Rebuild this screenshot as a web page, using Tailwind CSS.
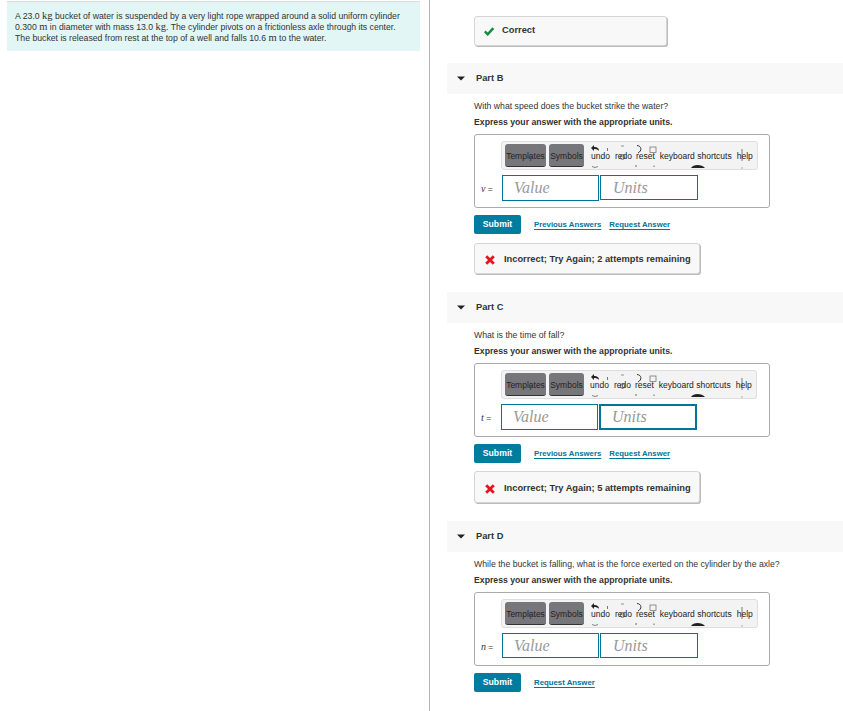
<!DOCTYPE html>
<html lang="en">
<head>
  <meta charset="UTF-8">
  <title>Part B, C, D</title>
  <script src="https://cdn.jsdelivr.net/npm/@tailwindcss/browser@4"></script>
</head>
<body class="bg-white font-['Liberation_Sans',Arial,sans-serif] text-[#333] overflow-hidden">
  <div class="flex h-[711px] w-[843px] overflow-hidden">

    <!-- Left: problem statement -->
    <div class="w-[430px] shrink-0 border-r border-[#b5b5b5] pt-px pl-[7px] pr-[9px]">
      <div class="h-[50px] bg-[#e2f6f5] border-t border-[#dcdcdc] pl-2 pt-[9px] text-[8.7px] leading-[11px] text-[#333]">
        <p>A 23.0 <span class="font-['Liberation_Serif',serif] text-[10.5px] leading-none">kg</span> bucket of water is suspended by a very light rope wrapped around a solid uniform cylinder</p>
        <p>0.300 <span class="font-['Liberation_Serif',serif] text-[10.5px] leading-none">m</span> in diameter with mass 13.0 <span class="font-['Liberation_Serif',serif] text-[10.5px] leading-none">kg</span>. The cylinder pivots on a frictionless axle through its center.</p>
        <p>The bucket is released from rest at the top of a well and falls 10.6 <span class="font-['Liberation_Serif',serif] text-[10.5px] leading-none">m</span> to the water.</p>
      </div>
    </div>

    <!-- Right: parts -->
    <div class="flex-1 pl-[17px] pt-4">
      <div class="ml-[27px] w-[193px] h-[30px] flex items-center gap-[8px] pl-[9px] rounded-[3px] bg-[#f8f8f8] border border-[#d4d4d4] shadow-[1px_1px_0_#bbb] text-[9.3px] font-bold">
        <svg class="w-[10px] h-[9px]" viewBox="0 0 10 9"><path d="M0.800 4.400 L3.700 7.300 L9.300 1.200" fill="none" stroke="#1a8a3c" stroke-width="2.500"/></svg>
        <span>Correct</span>
      </div>

      <!-- Part B -->
      <section class="mt-[17px] h-[229px]">
        <div class="h-[31px] bg-[#f8f8f8] flex items-center pl-[10px] text-[9.3px] font-bold">
          <svg class="w-[8px] h-[5px] mr-[11px]" viewBox="0 0 8 5"><path d="M0 0.5H8L4 4.5Z" fill="#222"/></svg>
          <span>Part B</span>
        </div>
        <div class="pl-[27px]">
          <p class="mt-[6px] h-[16px] leading-[11px] pt-px text-[8.7px]">With what speed does the bucket strike the water?</p>
          <p class="h-[12px] leading-[12px] text-[8.7px] font-bold">Express your answer with the appropriate units.</p>
          <div class="mt-[6px] w-[296px] h-[74px] border border-[#aaa] rounded-[3px] pl-[26px] pt-[6px]">
            <div class="relative w-[257px] h-[29px] bg-[#f3f3f3] border border-[#dedede] rounded-[3px] flex items-center pl-[3px] text-[8.5px] text-[#222] whitespace-nowrap">
              <span class="w-[41px] h-[23px] pt-[2px] rounded-[3px] bg-[#77767b] border-b border-[#333] flex items-center justify-center">Templates</span>
              <span class="ml-[3px] w-[35px] h-[23px] pt-[2px] rounded-[3px] bg-[#77767b] border-b border-[#333] flex items-center justify-center">Symbols</span>
              <span class="ml-[7px] mt-[2px]">undo</span>
              <span class="ml-[5px] mt-[2px]">redo</span>
              <span class="ml-[4px] mt-[2px]">reset</span>
              <span class="ml-[5px] mt-[2px]">keyboard shortcuts</span>
              <span class="ml-[5px] mt-[2px]">help</span>
              <svg class="absolute left-0 top-0 w-[257px] h-[29px]" viewBox="0 0 257 29"><path d="M89 6 L92 3 V5 C95 5 97 6 97 9 C96 7.500 94 7 92 7 V9Z" fill="#222"/><path d="M90 24.500 L93 25.500 L96 24.500" fill="none" stroke="#555" stroke-width=".7"/><path d="M105.500 6V9" stroke="#555" stroke-width=".8"/><path d="M119 4H122" stroke="#777" stroke-width=".8"/><circle cx="120.500" cy="15" r="2.300" fill="none" stroke="#444" stroke-width=".8"/><path d="M135 3.500 C140 4 140 9 136 11" fill="none" stroke="#333" stroke-width="1"/><path d="M134 23V25" stroke="#444" stroke-width=".8"/><rect x="148" y="5" width="6" height="5.500" fill="none" stroke="#666" stroke-width=".7"/><path d="M152 23.500V25" stroke="#444" stroke-width=".8"/><path d="M189 26 C191 22 200 22 203 26Z" fill="#222"/><path d="M240 7V19" stroke="#444" stroke-width=".7"/><path d="M240 25.500V26.500" stroke="#444" stroke-width=".8"/><path d="M27 13 L29 19 M30 14 L28 19" stroke="#444" stroke-width=".7"/></svg>
            </div>
            <div class="mt-[5px] flex items-start -ml-[20px]">
              <span class="w-[21px] mt-[6px] text-[8.5px] text-[#333] whitespace-nowrap"><i class="font-['Liberation_Serif',serif] text-[10px]">v</i> =</span>
              <span class="w-[97px] h-[26px] border border-[#00759a] pl-[11px] font-['Liberation_Serif',serif] italic text-[16px] leading-[24px] text-[#999]">Value</span>
              <span class="ml-px w-[98px] h-[25px] border border-[#00759a] pl-[12px] font-['Liberation_Serif',serif] italic text-[16px] leading-[23px] text-[#999]">Units</span>
            </div>
          </div>
          <div class="mt-[7px] flex items-center text-[7.8px] font-bold text-[#00759a]">
            <span class="w-[47px] h-[19px] rounded-[2px] bg-[#007c9e] text-white text-[8.7px] flex items-center justify-center">Submit</span>
            <a class="ml-[13px] underline underline-offset-2">Previous Answers</a>
            <a class="ml-2 underline underline-offset-2">Request Answer</a>
          </div>
          <div class="mt-[9px] w-[226px] h-[31px] pt-[2px] flex items-center gap-[9px] pl-[10px] rounded-[3px] bg-[#f8f8f8] border border-[#d4d4d4] shadow-[1px_1px_0_#bbb] text-[9.3px] font-bold whitespace-nowrap">
            <svg class="w-[10px] h-[10px]" viewBox="0 0 10 10"><path d="M1.200 1.200 L8.800 8.800 M8.800 1.200 L1.200 8.800" stroke="#e8141c" stroke-width="2.800"/></svg>
            <span>Incorrect; Try Again; 2 attempts remaining</span>
          </div>
        </div>
      </section>

      <!-- Part C -->
      <section class="h-[229px]">
        <div class="h-[31px] bg-[#f8f8f8] flex items-center pl-[10px] text-[9.3px] font-bold">
          <svg class="w-[8px] h-[5px] mr-[11px]" viewBox="0 0 8 5"><path d="M0 0.5H8L4 4.5Z" fill="#222"/></svg>
          <span>Part C</span>
        </div>
        <div class="pl-[27px]">
          <p class="mt-[6px] h-[16px] leading-[11px] pt-px text-[8.7px]">What is the time of fall?</p>
          <p class="h-[12px] leading-[12px] text-[8.7px] font-bold">Express your answer with the appropriate units.</p>
          <div class="mt-[6px] w-[296px] h-[74px] border border-[#aaa] rounded-[3px] pl-[26px] pt-[6px]">
            <div class="relative w-[256px] h-[29px] bg-[#f3f3f3] border border-[#dedede] rounded-[3px] flex items-center pl-[3px] text-[8.5px] text-[#222] whitespace-nowrap">
              <span class="w-[41px] h-[23px] pt-[2px] rounded-[3px] bg-[#77767b] border-b border-[#333] flex items-center justify-center">Templates</span>
              <span class="ml-[3px] w-[35px] h-[23px] pt-[2px] rounded-[3px] bg-[#77767b] border-b border-[#333] flex items-center justify-center">Symbols</span>
              <span class="ml-[6px] mt-[2px]">undo</span>
              <span class="ml-[5px] mt-[2px]">redo</span>
              <span class="ml-[4px] mt-[2px]">reset</span>
              <span class="ml-[5px] mt-[2px]">keyboard shortcuts</span>
              <span class="ml-[5px] mt-[2px]">help</span>
              <svg class="absolute left-0 top-0 w-[256px] h-[29px]" viewBox="0 0 256 29"><path d="M89 6 L92 3 V5 C95 5 97 6 97 9 C96 7.500 94 7 92 7 V9Z" fill="#222"/><path d="M90 24.500 L93 25.500 L96 24.500" fill="none" stroke="#555" stroke-width=".7"/><path d="M105.500 6V9" stroke="#555" stroke-width=".8"/><path d="M119 4H122" stroke="#777" stroke-width=".8"/><circle cx="120.500" cy="15" r="2.300" fill="none" stroke="#444" stroke-width=".8"/><path d="M135 3.500 C140 4 140 9 136 11" fill="none" stroke="#333" stroke-width="1"/><path d="M134 23V25" stroke="#444" stroke-width=".8"/><rect x="148" y="5" width="6" height="5.500" fill="none" stroke="#666" stroke-width=".7"/><path d="M152 23.500V25" stroke="#444" stroke-width=".8"/><path d="M189 26 C191 22 200 22 203 26Z" fill="#222"/><path d="M240 7V19" stroke="#444" stroke-width=".7"/><path d="M240 25.500V26.500" stroke="#444" stroke-width=".8"/><path d="M27 13 L29 19 M30 14 L28 19" stroke="#444" stroke-width=".7"/></svg>
            </div>
            <div class="mt-[5px] flex items-start -ml-[20px]">
              <span class="w-[20px] mt-[6px] text-[8.5px] text-[#333] whitespace-nowrap"><i class="font-['Liberation_Serif',serif] text-[10px]">t</i> =</span>
              <span class="w-[97px] h-[26px] border border-[#00759a] pl-[11px] font-['Liberation_Serif',serif] italic text-[16px] leading-[24px] text-[#999]">Value</span>
              <span class="ml-px w-[98px] h-[26px] border-2 border-[#00759a] pl-[11px] font-['Liberation_Serif',serif] italic text-[16px] leading-[22px] text-[#999]">Units</span>
            </div>
          </div>
          <div class="mt-[7px] flex items-center text-[7.8px] font-bold text-[#00759a]">
            <span class="w-[47px] h-[19px] rounded-[2px] bg-[#007c9e] text-white text-[8.7px] flex items-center justify-center">Submit</span>
            <a class="ml-[13px] underline underline-offset-2">Previous Answers</a>
            <a class="ml-2 underline underline-offset-2">Request Answer</a>
          </div>
          <div class="mt-[8px] w-[226px] h-[32px] pt-[3px] flex items-center gap-[9px] pl-[10px] rounded-[3px] bg-[#f8f8f8] border border-[#d4d4d4] shadow-[1px_1px_0_#bbb] text-[9.3px] font-bold whitespace-nowrap">
            <svg class="w-[10px] h-[10px]" viewBox="0 0 10 10"><path d="M1.200 1.200 L8.800 8.800 M8.800 1.200 L1.200 8.800" stroke="#e8141c" stroke-width="2.800"/></svg>
            <span>Incorrect; Try Again; 5 attempts remaining</span>
          </div>
        </div>
      </section>

      <!-- Part D -->
      <section>
        <div class="h-[31px] bg-[#f8f8f8] flex items-center pl-[10px] text-[9.3px] font-bold">
          <svg class="w-[8px] h-[5px] mr-[11px]" viewBox="0 0 8 5"><path d="M0 0.5H8L4 4.5Z" fill="#222"/></svg>
          <span>Part D</span>
        </div>
        <div class="pl-[27px]">
          <p class="mt-[6px] h-[16px] leading-[11px] pt-px text-[8.7px]">While the bucket is falling, what is the force exerted on the cylinder by the axle?</p>
          <p class="h-[12px] leading-[12px] text-[8.7px] font-bold">Express your answer with the appropriate units.</p>
          <div class="mt-[6px] w-[296px] h-[74px] border border-[#aaa] rounded-[3px] pl-[26px] pt-[6px]">
            <div class="relative w-[257px] h-[29px] bg-[#f3f3f3] border border-[#dedede] rounded-[3px] flex items-center pl-[3px] text-[8.5px] text-[#222] whitespace-nowrap">
              <span class="w-[41px] h-[23px] pt-[2px] rounded-[3px] bg-[#77767b] border-b border-[#333] flex items-center justify-center">Templates</span>
              <span class="ml-[3px] w-[35px] h-[23px] pt-[2px] rounded-[3px] bg-[#77767b] border-b border-[#333] flex items-center justify-center">Symbols</span>
              <span class="ml-[7px] mt-[2px]">undo</span>
              <span class="ml-[5px] mt-[2px]">redo</span>
              <span class="ml-[4px] mt-[2px]">reset</span>
              <span class="ml-[5px] mt-[2px]">keyboard shortcuts</span>
              <span class="ml-[5px] mt-[2px]">help</span>
              <svg class="absolute left-0 top-0 w-[257px] h-[29px]" viewBox="0 0 257 29"><path d="M89 6 L92 3 V5 C95 5 97 6 97 9 C96 7.500 94 7 92 7 V9Z" fill="#222"/><path d="M90 24.500 L93 25.500 L96 24.500" fill="none" stroke="#555" stroke-width=".7"/><path d="M105.500 6V9" stroke="#555" stroke-width=".8"/><path d="M119 4H122" stroke="#777" stroke-width=".8"/><circle cx="120.500" cy="15" r="2.300" fill="none" stroke="#444" stroke-width=".8"/><path d="M135 3.500 C140 4 140 9 136 11" fill="none" stroke="#333" stroke-width="1"/><path d="M134 23V25" stroke="#444" stroke-width=".8"/><rect x="148" y="5" width="6" height="5.500" fill="none" stroke="#666" stroke-width=".7"/><path d="M152 23.500V25" stroke="#444" stroke-width=".8"/><path d="M189 26 C191 22 200 22 203 26Z" fill="#222"/><path d="M240 7V19" stroke="#444" stroke-width=".7"/><path d="M240 25.500V26.500" stroke="#444" stroke-width=".8"/><path d="M27 13 L29 19 M30 14 L28 19" stroke="#444" stroke-width=".7"/></svg>
            </div>
            <div class="mt-[5px] flex items-start -ml-[20px]">
              <span class="w-[21px] mt-[6px] text-[8.5px] text-[#333] whitespace-nowrap"><i class="font-['Liberation_Serif',serif] text-[10px]">n</i> =</span>
              <span class="w-[97px] h-[25px] border border-[#00759a] pl-[11px] font-['Liberation_Serif',serif] italic text-[16px] leading-[23px] text-[#999]">Value</span>
              <span class="ml-px w-[98px] h-[25px] border border-[#00759a] pl-[12px] font-['Liberation_Serif',serif] italic text-[16px] leading-[23px] text-[#999]">Units</span>
            </div>
          </div>
          <div class="mt-[7px] flex items-center text-[7.8px] font-bold text-[#00759a]">
            <span class="w-[47px] h-[19px] rounded-[2px] bg-[#007c9e] text-white text-[8.7px] flex items-center justify-center">Submit</span>
            <a class="ml-[13px] underline underline-offset-2">Request Answer</a>
          </div>
        </div>
      </section>
    </div>
  </div>
</body>
</html>
